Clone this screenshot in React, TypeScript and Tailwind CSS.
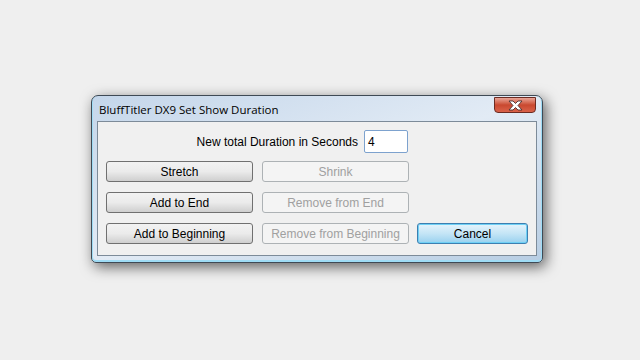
import React from "react";

const btn =
  "h-[21px] flex items-center justify-center rounded-[3px] text-[12px] leading-none";
const enabledBtn =
  btn +
  " border border-[#707070] text-black bg-gradient-to-b from-[#f2f2f2] via-[#ebebeb] to-[#cfcfcf]";
const disabledBtn =
  btn + " border border-[#adb2b5] text-[#a0a0a0] bg-[#f4f4f4]";

const CloseIcon = () => (
  <svg width="15" height="11" viewBox="0 0 15 11">
    <path
      d="M1 1 L5 1 L7.5 3.5 L10 1 L14 1 L10 5.5 L14 10 L10 10 L7.5 7.5 L5 10 L1 10 L5 5.5 Z"
      fill="#ffffff"
      stroke="#4a3030"
      strokeWidth="0.9"
    />
  </svg>
);

export default function App() {
  return (
    <div
      className="w-[640px] h-[360px] bg-[#efefef] pt-[95px] pl-[91px]"
      style={{ fontFamily: '"Liberation Sans", Arial, sans-serif' }}
    >
      <div className="w-[452px] h-[168px] rounded-t-[7px] rounded-b-[5px] border border-[#3f4a55] bg-gradient-to-br from-[#c4d6ea] via-[#e2ebf5] to-[#b7cde3] shadow-[3px_4px_14px_rgba(0,0,0,0.6),inset_0_-1px_0_1px_#9fdcf5] flex flex-col px-[5px] pb-[6px]">
        <div className="h-[25px] flex items-start justify-between">
          <div
            className="pt-[5px] pl-[2px] text-black"
            style={{ fontFamily: '"Open Sans", "DejaVu Sans", sans-serif', fontSize: "11.5px" }}
          >
            BluffTitler DX9 Set Show Duration
          </div>
          <div className="w-[42px] h-[16px] mt-[1px] mr-[1px] rounded-b-[4px] border border-[#6b2b22] bg-gradient-to-b from-[#e8a496] via-[#c9482f] to-[#d9624a] flex items-center justify-center">
            <CloseIcon />
          </div>
        </div>
        <div className="flex-1 bg-[#f0f0f0] border border-[#7d8b99] pt-[8px] pl-[8px]">
          <div className="w-[302px] h-[23px] flex items-center justify-end gap-[6px]">
            <span className="text-[12px] text-black">New total Duration in Seconds</span>
            <div className="w-[44px] h-[23px] bg-white border border-[#7da2ce] rounded-[2px] flex items-center pl-[3px] text-[12px] text-black">
              4
            </div>
          </div>
          <div className="mt-[8px] flex flex-col gap-[10px]">
            <div className="flex">
              <div className={enabledBtn + " w-[147px]"}>Stretch</div>
              <div className={disabledBtn + " w-[147px] ml-[9px]"}>Shrink</div>
            </div>
            <div className="flex">
              <div className={enabledBtn + " w-[147px]"}>Add to End</div>
              <div className={disabledBtn + " w-[147px] ml-[9px]"}>Remove from End</div>
            </div>
            <div className="flex">
              <div className={enabledBtn + " w-[147px]"}>Add to Beginning</div>
              <div className={disabledBtn + " w-[147px] ml-[9px]"}>
                Remove from Beginning
              </div>
              <div className="h-[21px] w-[111px] ml-[8px] flex items-center justify-center rounded-[3px] text-[12px] leading-none border border-[#3c7fb1] text-black bg-gradient-to-b from-[#e5f4fc] via-[#c4e5f6] to-[#98d1ef] shadow-[inset_0_0_0_1px_#6fd0f5]">
                Cancel
              </div>
            </div>
          </div>
        </div>
      </div>
    </div>
  );
}
